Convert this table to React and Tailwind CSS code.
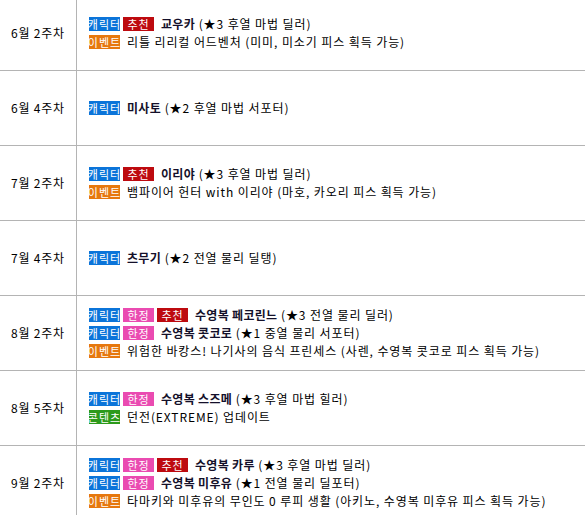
const BADGES = {
  char: { label: "캐릭터", cls: "bg-[#0b74d9]" },
  rec: { label: "추천", cls: "bg-[#bd0a0f]" },
  limited: { label: "한정", cls: "bg-[#ea4bb1]" },
  event: { label: "이벤트", cls: "bg-[#e6780e]" },
  content: { label: "콘텐츠", cls: "bg-[#2c9a1b]" },
};

const rows = [
  {
    week: "6월 2주차",
    lines: [
      { badges: ["char", "rec"], name: "교우카", desc: "(★3 후열 마법 딜러)" },
      { badges: ["event"], text: "리틀 리리컬 어드벤처 (미미, 미소기 피스 획득 가능)" },
    ],
  },
  {
    week: "6월 4주차",
    lines: [{ badges: ["char"], name: "미사토", desc: "(★2 후열 마법 서포터)" }],
  },
  {
    week: "7월 2주차",
    lines: [
      { badges: ["char", "rec"], name: "이리야", desc: "(★3 후열 마법 딜러)" },
      { badges: ["event"], text: "뱀파이어 헌터 with 이리야 (마호, 카오리 피스 획득 가능)" },
    ],
  },
  {
    week: "7월 4주차",
    lines: [{ badges: ["char"], name: "츠무기", desc: "(★2 전열 물리 딜탱)" }],
  },
  {
    week: "8월 2주차",
    lines: [
      { badges: ["char", "limited", "rec"], name: "수영복 페코린느", desc: "(★3 전열 물리 딜러)" },
      { badges: ["char", "limited"], name: "수영복 콧코로", desc: "(★1 중열 물리 서포터)" },
      { badges: ["event"], text: "위험한 바캉스! 나기사의 음식 프린세스 (사렌, 수영복 콧코로 피스 획득 가능)" },
    ],
  },
  {
    week: "8월 5주차",
    lines: [
      { badges: ["char", "limited"], name: "수영복 스즈메", desc: "(★3 후열 마법 힐러)" },
      { badges: ["content"], text: "던전(EXTREME) 업데이트" },
    ],
  },
  {
    week: "9월 2주차",
    lines: [
      { badges: ["char", "limited", "rec"], name: "수영복 카루", desc: "(★3 후열 마법 딜러)" },
      { badges: ["char", "limited"], name: "수영복 미후유", desc: "(★1 전열 물리 딜포터)" },
      { badges: ["event"], text: "타마키와 미후유의 무인도 0 루피 생활 (아키노, 수영복 미후유 피스 획득 가능)" },
    ],
  },
];

function Badge({ type }) {
  const b = BADGES[type];
  return (
    <span className={`${b.cls} w-[31px] h-[14px] flex items-center justify-center text-white text-[11px] leading-none tracking-[1px]`}>
      {b.label}
    </span>
  );
}

export default function App() {
  return (
    <div className="w-[585px] h-[515px] overflow-hidden bg-white text-black" style={{ fontFamily: '"Noto Sans CJK KR", "Noto Sans", sans-serif' }}>
      <div className="-mt-[4px]">
        {rows.map((row) => (
          <div key={row.week} className="flex h-[75px] border-b border-[#b4b4b4]">
            <div className="w-[77px] shrink-0 border-r border-[#b4b4b4] flex items-center justify-center text-[12px] tracking-[0.8px]">
              {row.week}
            </div>
            <div className="flex-1 flex flex-col justify-center pl-[12px] gap-[4px]">
              {row.lines.map((line, i) => (
                <div key={i} className="flex items-center h-[14px] text-[12px] leading-none whitespace-nowrap tracking-[0.9px]">
                  <div className="flex gap-[3px] mr-[7px] tracking-normal">
                    {line.badges.map((t, j) => <Badge key={j} type={t} />)}
                  </div>
                  {line.name ? (
                    <span>
                      <b className="font-bold text-[#14102a] tracking-[0.3px]">{line.name}</b> {line.desc}
                    </span>
                  ) : (
                    <span>{line.text}</span>
                  )}
                </div>
              ))}
            </div>
          </div>
        ))}
      </div>
    </div>
  );
}
